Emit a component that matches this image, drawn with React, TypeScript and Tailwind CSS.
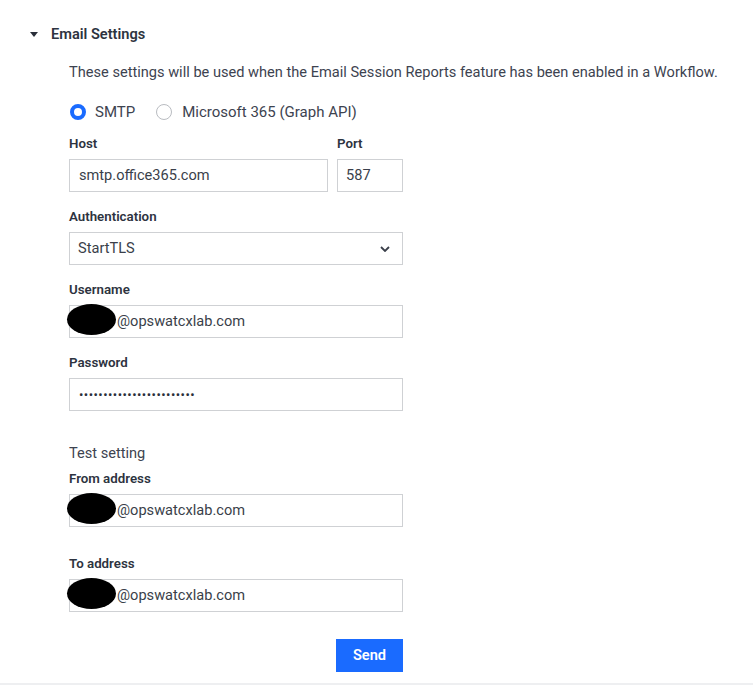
import React from 'react';

const font = { fontFamily: 'Roboto, "Liberation Sans", sans-serif' };

const Label: React.FC<{ children: React.ReactNode }> = ({ children }) => (
  <div className="h-5 text-[13.3px] leading-5 font-semibold text-[#2d3340]">{children}</div>
);

const Field: React.FC<{ value: string; redacted?: boolean; className?: string }> = ({ value, redacted, className = '' }) => (
  <div className={`relative mt-[5px] h-[33px] border border-[#cfd1d4] bg-white flex items-center text-[14.6px] text-[#3a3f4a] ${redacted ? 'pl-[47px]' : 'pl-[9px]'} ${className}`}>
    {redacted && <div className="absolute left-[-3px] top-[-2px] w-[49px] h-[31px] rounded-[50%] bg-black" />}
    {value}
  </div>
);

export default function App() {
  return (
    <div className="w-[753px] h-[689px] bg-white relative" style={font}>
      {/* section header */}
      <div className="flex items-center pt-[24px] pl-[30px] h-[44px]">
        <svg width="8" height="5" viewBox="0 0 8 5" className="mr-[13px]">
          <path d="M0 0h8L4 5z" fill="#2a2f3a" />
        </svg>
        <span className="text-[14.6px] leading-5 font-semibold text-[#2d3340]">Email Settings</span>
      </div>

      <div className="pl-[69px] w-[334px] box-content">
        <p className="mt-[18px] h-5 text-[14.6px] leading-5 text-[#3d4350] whitespace-nowrap">
          These settings will be used when the Email Session Reports feature has been enabled in a Workflow.
        </p>

        <div className="mt-[20px] h-5 flex items-center text-[15px] text-[#3d4350]">
          <span className="w-4 h-4 rounded-full border-[4.5px] border-[#1a6bff] bg-white ml-[1px]" />
          <span className="ml-[9px]">SMTP</span>
          <span className="w-4 h-4 rounded-full border-[1.5px] border-[#b9bcc1] bg-white ml-[21px]" />
          <span className="ml-[10px]">Microsoft 365 (Graph API)</span>
        </div>

        <div className="mt-[12px] flex gap-[9px]">
          <div className="w-[259px]">
            <Label>Host</Label>
            <Field value="smtp.office365.com" />
          </div>
          <div className="w-[66px]">
            <Label>Port</Label>
            <Field value="587" className="!pl-[8px]" />
          </div>
        </div>

        <div className="mt-[15px]">
          <Label>Authentication</Label>
          <div className="mt-[5px] h-[33px] border border-[#cfd1d4] flex items-center justify-between pl-[8px] pr-[12px] text-[14.6px] text-[#3a3f4a]">
            <span>StartTLS</span>
            <svg width="10" height="6" viewBox="0 0 10 6">
              <path d="M1 1l4 4 4-4" stroke="#3a3f4a" strokeWidth="1.8" fill="none" />
            </svg>
          </div>
        </div>

        <div className="mt-[15px]">
          <Label>Username</Label>
          <Field value="@opswatcxlab.com" redacted />
        </div>

        <div className="mt-[15px]">
          <Label>Password</Label>
          <Field value="••••••••••••••••••••••••" className="!text-[13px] tracking-[0.45px] !text-[#2a2f3a]" />
        </div>

        <div className="mt-[32px] h-5 text-[14.6px] leading-5 text-[#3d4350]">Test setting</div>

        <div className="mt-[6px]">
          <Label>From address</Label>
          <Field value="@opswatcxlab.com" redacted />
        </div>

        <div className="mt-[27px]">
          <Label>To address</Label>
          <Field value="@opswatcxlab.com" redacted />
        </div>

        <div className="mt-[27px] flex justify-end">
          <button className="w-[67px] h-[33px] bg-[#1a6bff] text-white text-[14.6px] font-semibold">Send</button>
        </div>
      </div>

      <div className="absolute left-0 right-0 top-[683px] h-[2px] bg-[#eeeff1]" />
    </div>
  );
}
